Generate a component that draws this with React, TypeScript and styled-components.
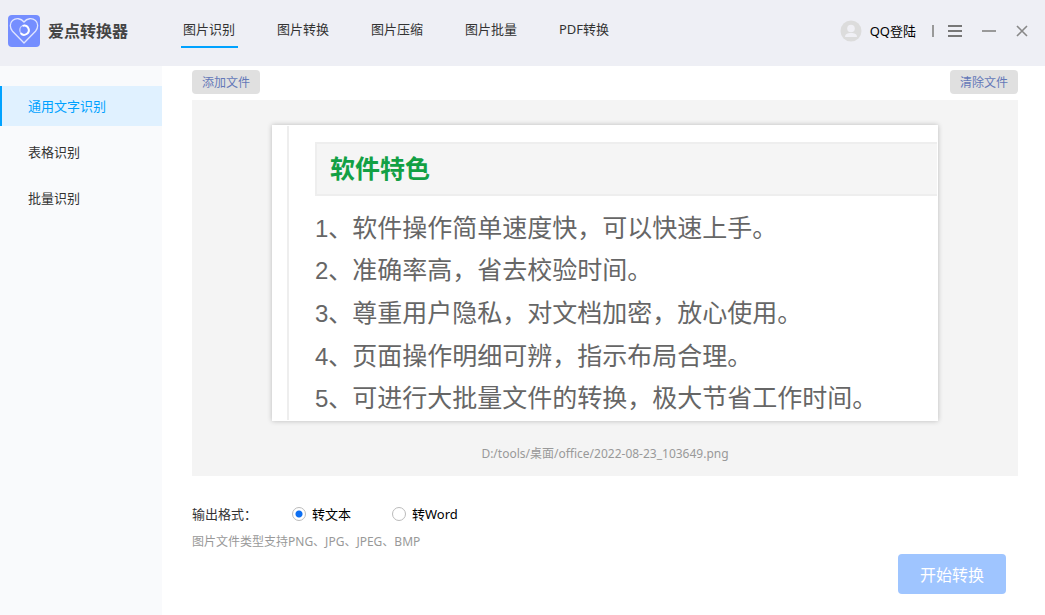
import React, { useState } from "react";
import styled, { createGlobalStyle } from "styled-components";

const GlobalStyle = createGlobalStyle`
  * { box-sizing: border-box; }
  body {
    margin: 0;
    background: #fff;
    color: #333;
    font-family: "Noto Sans", "Noto Sans CJK SC", sans-serif;
    font-size: 13px;
    line-height: 20px;
  }
  button, input { font: inherit; margin: 0; }
  button { border: 0; padding: 0; background: none; cursor: pointer; }
  a { color: inherit; text-decoration: none; }
`;

const Window = styled.div`
  display: flex;
  flex-direction: column;
  min-height: 100vh;
`;

const Header = styled.header`
  display: flex;
  align-items: flex-start;
  height: 66px;
  padding: 0 15px 0 8px;
  background: #eeeff5;
`;

const Brand = styled.div`
  display: flex;
  align-items: center;
  gap: 8px;
  width: 173px;
  height: 62px;
  color: #444;
  font-size: 16px;
  font-weight: 700;
`;

const Nav = styled.nav`
  display: flex;
  gap: 37px;
  padding-top: 19px;
`;

const Tab = styled.a<{ $active?: boolean }>`
  width: 57px;
  height: 29px;
  padding-left: 2px;
  white-space: nowrap;
  border-bottom: 2px solid ${(p) => (p.$active ? "#00a2ff" : "transparent")};
`;

const Tools = styled.div`
  display: flex;
  align-items: center;
  height: 62px;
  margin-left: auto;
`;

const Login = styled.button`
  display: flex;
  align-items: center;
  gap: 8px;
  color: #000;
  white-space: nowrap;
`;

const Divider = styled.span`
  width: 2px;
  height: 12px;
  margin: 0 14px 0 16px;
  background: #999;
`;

const WindowButtons = styled.div`
  display: flex;
  gap: 17px;
`;

const IconButton = styled.button`
  display: flex;
  width: 16px;
  height: 16px;
`;

const Body = styled.div`
  display: flex;
  flex: 1;
`;

const Sidebar = styled.aside`
  display: flex;
  flex-direction: column;
  flex: none;
  gap: 6px;
  width: 162px;
  padding-top: 20px;
  background: #f9fafc;
`;

const SideLink = styled.a<{ $active?: boolean }>`
  padding: 0 0 0 26px;
  line-height: 40px;
  border-left: 2px solid ${(p) => (p.$active ? "#00a2ff" : "transparent")};
  background: ${(p) => (p.$active ? "#e0f1ff" : "transparent")};
  color: ${(p) => (p.$active ? "#00a2ff" : "#333")};
`;

const Main = styled.main`
  display: flex;
  flex-direction: column;
  flex: 1;
  min-width: 0;
  padding: 4px 27px 20px 30px;
`;

const Toolbar = styled.div`
  display: flex;
  justify-content: space-between;
  margin-bottom: 6px;
`;

const FileButton = styled.button`
  width: 68px;
  height: 24px;
  padding-top: 2px;
  border-radius: 4px;
  background: #e0e0e0;
  color: #6478b8;
  font-size: 12px;
`;

const Preview = styled.figure`
  display: flex;
  flex-direction: column;
  align-items: center;
  gap: 23px;
  margin: 0;
  padding: 25px 20px 12px;
  background: #f4f4f4;
`;

const Sheet = styled.div`
  display: flex;
  width: 100%;
  max-width: 666px;
  padding-left: 14px;
  background: #fff;
  border: 1px solid #fff;
  box-shadow: 0 0 5px rgba(0, 0, 0, 0.24);
  overflow: hidden;
`;

const SheetContent = styled.div`
  flex: 1;
  padding: 16px 0 0 26px;
  border-left: 2px solid #eee;
  color: #666;
  font-family: "Liberation Sans", "Noto Sans CJK SC", sans-serif;
  font-size: 25px;
`;

const SheetTitle = styled.h2`
  margin: 0 0 11px;
  padding-left: 13px;
  border: 2px solid #eee;
  border-right: 0;
  background: #f5f5f5;
  color: #12a044;
  font-size: 25px;
  line-height: 50px;
`;

const Features = styled.ol`
  display: grid;
  grid-auto-rows: 1fr;
  align-items: center;
  height: 213px;
  margin: 0;
  padding: 0;
  list-style: none;
  line-height: 40px;
  white-space: nowrap;
`;

const Feature = styled.li`
  display: flex;
  align-items: baseline;
`;

const FeatureNumber = styled.span`
  font-size: 24px;
`;

const Caption = styled.figcaption`
  color: #999;
  font-size: 12px;
`;

const Formats = styled.fieldset`
  display: flex;
  align-items: center;
  margin: 28px 0 0;
  padding: 0;
  border: 0;
`;

const Legend = styled.legend`
  float: left;
  width: 100px;
  padding: 0;
`;

const Option = styled.label`
  display: flex;
  align-items: center;
  gap: 6px;
  width: 100px;
  color: #000;
`;

const Radio = styled.input`
  appearance: none;
  width: 14px;
  height: 14px;
  border: 1px solid #bbb;
  border-radius: 50%;
  background: #fff;
  &:checked {
    background: radial-gradient(circle, #0d6ff2 0 3px, #fff 4px);
  }
`;

const Hint = styled.p`
  margin: 8px 0 0;
  color: #999;
  font-size: 12px;
`;

const StartButton = styled.button`
  align-self: flex-end;
  width: 108px;
  height: 40px;
  margin: 2px 12px 0 0;
  padding-top: 2px;
  border-radius: 4px;
  background: #9fc5ff;
  color: #fff;
  font-size: 16px;
`;

const Logo = () => (
  <svg width="32" height="32" viewBox="0 0 32 32" fill="none" aria-hidden="true">
    <rect width="32" height="32" rx="4" fill="#758eff" />
    <path
      d="M16 28 4.5 16.2C1.6 13 1.6 8 4.5 5.5 8 2.6 13 3.2 16 7c3-3.8 8-4.4 11.5-1.5 2.9 2.5 2.9 7.5 0 10.7Z"
      stroke="#e1e6ff"
      strokeWidth="1.3"
      strokeLinejoin="round"
    />
    <circle cx="16.4" cy="15" r="4.6" stroke="#c5cfff" strokeWidth="1.4" />
    <path d="M14.6 10.8A4.6 4.6 0 1 1 12.6 18.1" stroke="#fff" strokeWidth="1.9" />
  </svg>
);

const Avatar = () => (
  <svg width="22" height="22" viewBox="0 0 22 22" aria-hidden="true">
    <circle cx="11" cy="11" r="10.5" fill="#dcdcdc" />
    <circle cx="11" cy="8.5" r="3.8" fill="#f0f0f5" />
    <path d="M5 17c0-3 2.3-4 6-4s6 1 6 4Z" fill="#f0f0f5" />
  </svg>
);

const tabs = ["图片识别", "图片转换", "图片压缩", "图片批量", "PDF转换"];
const modes = ["通用文字识别", "表格识别", "批量识别"];
const formats = ["转文本", "转Word"];
const features = [
  "软件操作简单速度快，可以快速上手。",
  "准确率高，省去校验时间。",
  "尊重用户隐私，对文档加密，放心使用。",
  "页面操作明细可辨，指示布局合理。",
  "可进行大批量文件的转换，极大节省工作时间。",
];

export default function App() {
  const [format, setFormat] = useState(formats[0]);
  return (
    <Window>
      <GlobalStyle />
      <Header>
        <Brand>
          <Logo />
          爱点转换器
        </Brand>
        <Nav>
          {tabs.map((t, i) => (
            <Tab key={t} href="#" $active={i === 0}>{t}</Tab>
          ))}
        </Nav>
        <Tools>
          <Login>
            <Avatar />
            QQ登陆
          </Login>
          <Divider />
          <WindowButtons>
            <IconButton aria-label="菜单">
              <svg width="16" height="16" stroke="#777" strokeWidth="2">
                <path d="M0 3h14M0 8h14M0 13h14" />
              </svg>
            </IconButton>
            <IconButton aria-label="最小化">
              <svg width="16" height="16" stroke="#999" strokeWidth="2">
                <path d="M1 8h14" />
              </svg>
            </IconButton>
            <IconButton aria-label="关闭">
              <svg width="16" height="16" stroke="#888" strokeWidth="1.6">
                <path d="m3 3 10 10M13 3 3 13" />
              </svg>
            </IconButton>
          </WindowButtons>
        </Tools>
      </Header>
      <Body>
        <Sidebar>
          {modes.map((m, i) => (
            <SideLink key={m} href="#" $active={i === 0}>{m}</SideLink>
          ))}
        </Sidebar>
        <Main>
          <Toolbar>
            <FileButton>添加文件</FileButton>
            <FileButton>清除文件</FileButton>
          </Toolbar>
          <Preview>
            <Sheet>
              <SheetContent>
                <SheetTitle>软件特色</SheetTitle>
                <Features>
                  {features.map((f, i) => (
                    <Feature key={f}>
                      <FeatureNumber>{i + 1}、</FeatureNumber>
                      <span>{f}</span>
                    </Feature>
                  ))}
                </Features>
              </SheetContent>
            </Sheet>
            <Caption>D:/tools/桌面/office/2022-08-23_103649.png</Caption>
          </Preview>
          <Formats>
            <Legend>输出格式：</Legend>
            {formats.map((f) => (
              <Option key={f}>
                <Radio type="radio" name="format" checked={format === f} onChange={() => setFormat(f)} />
                {f}
              </Option>
            ))}
          </Formats>
          <Hint>图片文件类型支持PNG、JPG、JPEG、BMP</Hint>
          <StartButton>开始转换</StartButton>
        </Main>
      </Body>
    </Window>
  );
}
